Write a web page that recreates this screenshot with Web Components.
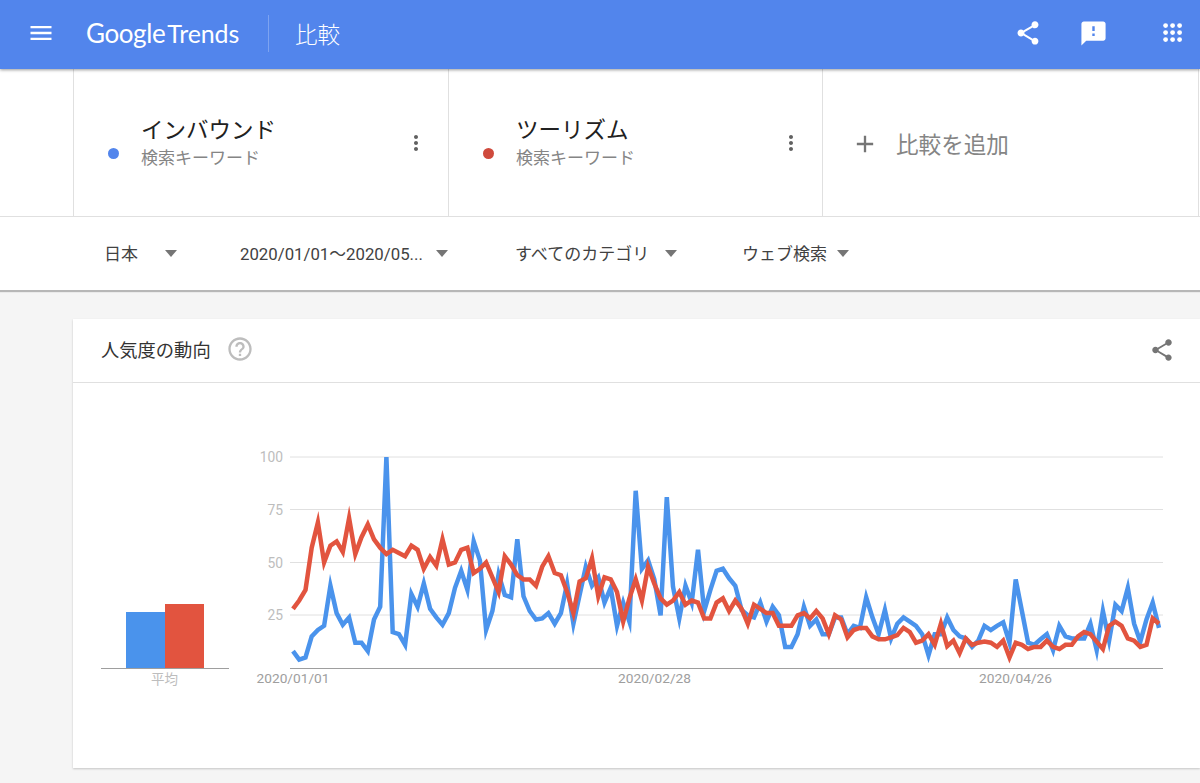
<!DOCTYPE html>
<html lang="ja">
<head>
<meta charset="utf-8">
<title>Google Trends</title>
<style>
  html, body { margin: 0; padding: 0; height: 783px; overflow: hidden; background: #f5f5f5; }
  body { font-family: Roboto, "Noto Sans CJK JP", sans-serif; }
  gt-card { margin: 29px 0 0 73px; }
</style>
</head>
<body>
<gt-header title-text="比較"></gt-header>
<gt-terms>
  <gt-term color="#5285ec" name="インバウンド" kind="検索キーワード"></gt-term>
  <gt-term color="#cf4a3c" name="ツーリズム" kind="検索キーワード"></gt-term>
  <gt-add>比較を追加</gt-add>
</gt-terms>
<gt-filters>
  <gt-filter style="--gap: 27px; --size: 17px">日本</gt-filter>
  <gt-filter style="--gap: 13px">2020/01/01〜2020/05...</gt-filter>
  <gt-filter style="--size: 17px">すべてのカテゴリ</gt-filter>
  <gt-filter style="--gap: 10px; --size: 17px">ウェブ検索</gt-filter>
</gt-filters>
<gt-card heading="人気度の動向">
  <gt-chart></gt-chart>
</gt-card>

<script>
const ICONS = {
  menu: 'M3 18h18v-2H3v2zm0-5h18v-2H3v2zm0-7v2h18V6H3z',
  share: 'M18 16.08c-.76 0-1.44.3-1.96.77L8.91 12.7c.05-.23.09-.46.09-.7s-.04-.47-.09-.7l7.05-4.11c.54.5 1.25.81 2.04.81 1.66 0 3-1.34 3-3s-1.34-3-3-3-3 1.34-3 3c0 .24.04.47.09.7L8.04 9.81C7.5 9.31 6.79 9 6 9c-1.66 0-3 1.34-3 3s1.34 3 3 3c.79 0 1.5-.31 2.04-.81l7.12 4.16c-.05.21-.08.43-.08.65 0 1.61 1.31 2.92 2.92 2.92 1.61 0 2.92-1.31 2.92-2.92s-1.31-2.92-2.92-2.92z',
  feedback: 'M20 2H4c-1.1 0-1.99.9-1.99 2L2 22l4-4h14c1.1 0 2-.9 2-2V4c0-1.1-.9-2-2-2zm-7 12h-2v-2h2v2zm0-4h-2V6h2v4z',
  kebab: 'M12 8c1.1 0 2-.9 2-2s-.9-2-2-2-2 .9-2 2 .9 2 2 2zm0 2c-1.1 0-2 .9-2 2s.9 2 2 2 2-.9 2-2-.9-2-2-2zm0 6c-1.1 0-2 .9-2 2s.9 2 2 2 2-.9 2-2-.9-2-2-2z',
  plus: 'M19 13h-6v6h-2v-6H5v-2h6V5h2v6h6v2z',
  help: 'M11 18h2v-2h-2v2zm1-16C6.48 2 2 6.48 2 12s4.48 10 10 10 10-4.48 10-10S17.52 2 12 2zm0 18c-4.41 0-8-3.59-8-8s3.59-8 8-8 8 3.59 8 8-3.59 8-8 8zm0-14c-2.21 0-4 1.79-4 4h2c0-1.1.9-2 2-2s2 .9 2 2c0 2-3 1.75-3 5h2c0-2.25 3-2.5 3-5 0-2.21-1.79-4-4-4z'
};

function icon(name, size, color) {
  return `<svg width="${size}" height="${size}" viewBox="0 0 24 24" fill="${color}" style="display:block"><path d="${ICONS[name]}"/></svg>`;
}

class GtHeader extends HTMLElement {
  connectedCallback() {
    const dots = [];
    for (let r = 0; r < 3; r++) {
      for (let c = 0; c < 3; c++) {
        dots.push(`<circle cx="${2.6 + c * 7}" cy="${2.6 + r * 7}" r="2.4"/>`);
      }
    }
    this.attachShadow({mode: 'open'}).innerHTML = `
      <style>
        :host {
          display: flex;
          align-items: center;
          position: relative;
          z-index: 3;
          box-sizing: border-box;
          height: 69px;
          padding-bottom: 3px;
          background: #5285ec;
          color: #fff;
          box-shadow: 0 1px 3px rgba(0,0,0,.4);
        }
        #menu { margin-left: 27px; }
        #logo {
          margin-left: 31px;
          width: 155px;
          font: 400 26px/1 Lato, sans-serif;
          white-space: nowrap;
          letter-spacing: -.4px;
        }
        #logo span { margin-left: 2px; font-size: 25px; font-weight: 400; letter-spacing: -.1px; }
        #divider { margin-left: 27px; width: 1px; height: 37px; background: rgba(255,255,255,.25); }
        #title { margin-left: 26px; font: 300 22.5px/1 "Noto Sans CJK JP", sans-serif; }
        #actions { margin-left: auto; display: flex; align-items: center; padding-right: 17px; }
        #share { margin-right: 37px; }
        #feedback { margin-right: 55px; }
      </style>
      <div id="menu">${icon('menu', 28, '#fff')}</div>
      <div id="logo">Google<span>Trends</span></div>
      <div id="divider"></div>
      <div id="title">${this.getAttribute('title-text')}</div>
      <div id="actions">
        <div id="share">${icon('share', 28, '#fff')}</div>
        <div id="feedback">${icon('feedback', 29, '#fff')}</div>
        <svg width="20" height="20" viewBox="0 0 20 20" fill="#fff">${dots.join('')}</svg>
      </div>
    `;
  }
}
customElements.define('gt-header', GtHeader);

class GtTerms extends HTMLElement {
  connectedCallback() {
    this.attachShadow({mode: 'open'}).innerHTML = `
      <style>
        :host {
          display: grid;
          grid-template-columns: 375px 374px 377px;
          height: 147px;
          padding-left: 73px;
          background: #fff;
          border-bottom: 1px solid #e0e0e0;
        }
      </style>
      <slot></slot>
    `;
  }
}
customElements.define('gt-terms', GtTerms);

class GtTerm extends HTMLElement {
  connectedCallback() {
    this.attachShadow({mode: 'open'}).innerHTML = `
      <style>
        :host {
          display: flex;
          position: relative;
          box-sizing: border-box;
          border-left: 1px solid #e0e0e0;
          padding: 44px 0 0 34px;
          font-family: "Noto Sans CJK JP", sans-serif;
        }
        #dot {
          flex: none;
          width: 11px;
          height: 11px;
          margin-top: 35px;
          border-radius: 50%;
          background: ${this.getAttribute('color')};
        }
        #text { margin-left: 22px; }
        #name { font-size: 22.5px; line-height: 30px; margin-bottom: 2px; color: #212121; }
        #kind { font-size: 17px; line-height: 24px; color: #858585; }
        #more { position: absolute; left: 330px; top: 62px; }
      </style>
      <div id="dot"></div>
      <div id="text">
        <div id="name">${this.getAttribute('name')}</div>
        <div id="kind">${this.getAttribute('kind')}</div>
      </div>
      <div id="more">${icon('kebab', 24, '#616161')}</div>
    `;
  }
}
customElements.define('gt-term', GtTerm);

class GtAdd extends HTMLElement {
  connectedCallback() {
    this.attachShadow({mode: 'open'}).innerHTML = `
      <style>
        :host {
          display: flex;
          align-items: center;
          box-sizing: border-box;
          border-left: 1px solid #e0e0e0;
          border-right: 1px solid #e0e0e0;
          padding: 3px 0 0 28px;
          color: #858585;
          font: 400 22.6px/1 "Noto Sans CJK JP", sans-serif;
        }
        span { margin-left: 17px; }
      </style>
      ${icon('plus', 28, '#757575')}
      <span><slot></slot></span>
    `;
  }
}
customElements.define('gt-add', GtAdd);

class GtFilters extends HTMLElement {
  connectedCallback() {
    this.attachShadow({mode: 'open'}).innerHTML = `
      <style>
        :host {
          display: grid;
          grid-template-columns: 136px 275px 227px auto;
          justify-content: start;
          align-items: center;
          position: relative;
          z-index: 2;
          height: 73px;
          padding-left: 104px;
          background: #fff;
          box-shadow: 0 2px 1px rgba(0,0,0,.25);
        }
      </style>
      <slot></slot>
    `;
  }
}
customElements.define('gt-filters', GtFilters);

class GtFilter extends HTMLElement {
  connectedCallback() {
    this.attachShadow({mode: 'open'}).innerHTML = `
      <style>
        :host {
          display: flex;
          align-items: center;
          font: 400 var(--size, 16.8px)/24px Roboto, "Noto Sans CJK JP", sans-serif;
          color: #424242;
          white-space: nowrap;
        }
        i {
          width: 0;
          height: 0;
          margin-left: var(--gap, 16px);
          border: 6px solid transparent;
          border-top: 7px solid #757575;
          border-bottom: 0;
        }
      </style>
      <slot></slot><i></i>
    `;
  }
}
customElements.define('gt-filter', GtFilter);

class GtCard extends HTMLElement {
  connectedCallback() {
    this.attachShadow({mode: 'open'}).innerHTML = `
      <style>
        :host {
          display: block;
          height: 449px;
          background: #fff;
          box-shadow: 0 1px 2px rgba(0,0,0,.2);
        }
        header {
          display: flex;
          align-items: center;
          box-sizing: border-box;
          height: 64px;
          padding: 0 25px 3px 28px;
          border-bottom: 1px solid #e0e0e0;
          font: 400 18.3px/1 "Noto Sans CJK JP", sans-serif;
          color: #333;
        }
        #help { margin-left: 15px; }
        #share { margin-left: auto; padding-top: 1px; }
      </style>
      <header>
        <span>${this.getAttribute('heading')}</span>
        <div id="help">${icon('help', 28, '#bdbdbd')}</div>
        <div id="share">${icon('share', 26, '#757575')}</div>
      </header>
      <slot></slot>
    `;
  }
}
customElements.define('gt-card', GtCard);

// values read off the reference, one per day
const INBOUND = [8,4,5,15,18,20,39,26,20.5,24,12,12,8,23,29,100,17,16,11,35,29,40,28,24,20.5,26,38,46,37,60,51,
  18,27,44.5,34.6,33.5,61,34,27,23,23.5,26,21,26,40,21,34.6,48,39,43,31,38,20,31,22,84,47,51,42,25,81,38.5,23.5,39,31,56,27,37,
  46,47,42.5,39,27.5,25,24,31,22,29,25,10,10,16,29,20,23,16,16,24,24,16,20,19,33.5,24,16,27.5,14,21,24,22,20,16,6,16,16,
  24,18,15,14,10,13,20,18,20,21.6,12,42,27,12,11,13.6,16,8.5,20,15,14,14,14,21,8.5,27,13,30,27,38,21,12.5,23,31,19];
const TOURISM = [28,32,37,57,69,50,58,60,55,71,54,62,68,61,57,54,56,54.5,53,58,56,47,52.6,48.5,61,49,50,56,57,45,47,
  50,43,36,53,49,44,42,42,39,48,53,45,44,36,26,41,42.5,52,34,43,42,36,22,33,42,32,48,40,33,30,32,36,30,32,31,23.5,23.5,
  31,33,27,32,28,21,30,28,26,26,20,20,20,25,26,23.5,27,23.5,16,25,23,14.5,18,19,19,15,13.6,13.6,14.5,15.6,19,17,12,13,16,11,21,
  10.4,13,7,14,11,12,12.5,12,10,13,5,12,11,9,10,10,13,10,9,11,11,15,17,16,12.5,9,20,22,20,14,13,10,11,23.5,21];

class GtChart extends HTMLElement {
  connectedCallback() {
    const y = v => (668 - v * 2.11).toFixed(1);
    const line = data => data.map((v, i) => `${(293 + i * 6.23).toFixed(1)},${y(v)}`).join(' ');
    const grid = [[100, 457], [75, 509.5], [50, 562.5], [25, 615]].map(([label, py]) => `
      <line x1="290" x2="1163" y1="${py}" y2="${py}" stroke="#e0e0e0"/>
      <text x="283" y="${py + 5}" text-anchor="end" class="axis">${label}</text>`).join('');
    const dates = [['2020/01/01', 293], ['2020/02/28', 654.5], ['2020/04/26', 1015.5]].map(([label, x]) =>
      `<text x="${x}" y="683" text-anchor="middle" class="date">${label}</text>`).join('');
    this.attachShadow({mode: 'open'}).innerHTML = `
      <style>
        :host { display: block; height: 385px; }
        svg { display: block; }
        text { font-family: Roboto, "Noto Sans CJK JP", sans-serif; }
        .axis { font-size: 13.8px; fill: #bdbdbd; }
        .date { font-size: 13.7px; fill: #9e9e9e; }
        .avg { font-size: 13.5px; fill: #bdbdbd; }
        polyline { fill: none; stroke-width: 4.5; stroke-linejoin: miter; stroke-miterlimit: 6; }
      </style>
      <svg width="1127" height="385" viewBox="73 383 1127 385">
        <rect x="126" y="612" width="39" height="56" fill="#4a93ec"/>
        <rect x="165" y="604" width="39" height="64" fill="#e2543f"/>
        <line x1="101" x2="229" y1="668.5" y2="668.5" stroke="#9e9e9e"/>
        <text x="164.5" y="684" text-anchor="middle" class="avg">平均</text>
        ${grid}
        <line x1="290" x2="1163" y1="668.5" y2="668.5" stroke="#9e9e9e"/>
        ${dates}
        <polyline points="${line(INBOUND)}" stroke="#4a93ec"/>
        <polyline points="${line(TOURISM)}" stroke="#e2543f"/>
      </svg>
    `;
  }
}
customElements.define('gt-chart', GtChart);
</script>
</body>
</html>
